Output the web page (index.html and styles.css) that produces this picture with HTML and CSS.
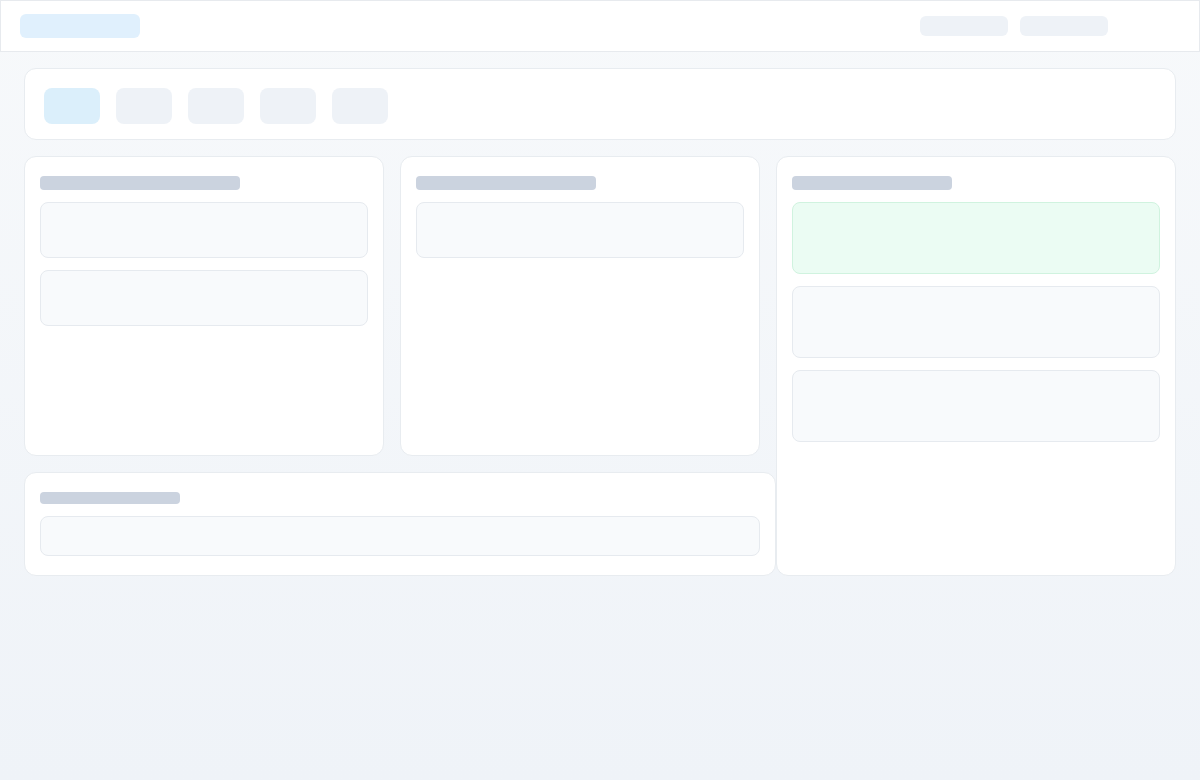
FILE: index.html
```html
<!DOCTYPE html>
<html lang="en">
<head>
<meta charset="utf-8">
<title>Loading</title>
<link rel="stylesheet" href="styles.css">
</head>
<body>
<header class="topbar">
  <div class="sk sk-logo"></div>
  <div class="topbar-right">
    <div class="sk sk-nav"></div>
    <div class="sk sk-nav"></div>
    <div class="sk-spacer"></div>
  </div>
</header>
<main class="page">
  <section class="card tabs">
    <div class="sk tab tab-active"></div>
    <div class="sk tab"></div>
    <div class="sk tab"></div>
    <div class="sk tab"></div>
    <div class="sk tab"></div>
  </section>
  <div class="grid">
    <section class="card col col-a">
      <div class="sk title w200"></div>
      <div class="block h56"></div>
      <div class="block h56"></div>
    </section>
    <section class="card col col-b">
      <div class="sk title w180"></div>
      <div class="block h56"></div>
    </section>
    <section class="card col col-c">
      <div class="sk title w160"></div>
      <div class="block h72 green"></div>
      <div class="block h72"></div>
      <div class="block h72"></div>
    </section>
    <section class="card col col-wide">
      <div class="sk title small w140"></div>
      <div class="block h40"></div>
    </section>
  </div>
</main>
</body>
</html>
```
FILE: styles.css
```css
* { box-sizing: border-box; }
html, body { margin: 0; padding: 0; }
body {
  width: 1200px;
  min-height: 780px;
  font-family: "Inter", "Liberation Sans", sans-serif;
  background: linear-gradient(180deg, #f7f9fb 0%, #eff3f8 100%);
}
.topbar {
  height: 52px;
  background: #ffffff;
  border: 1px solid #e7eaee;
  display: flex;
  align-items: center;
  justify-content: space-between;
  padding: 0 19px;
}
.topbar-right { display: flex; gap: 12px; align-items: center; }
.sk { border-radius: 6px; }
.sk-logo { width: 120px; height: 24px; background: #e0f0fd; }
.sk-nav { width: 88px; height: 20px; background: #eef2f7; }
.sk-spacer { width: 60px; height: 20px; }
.page { padding: 16px 24px; }
.card {
  background: #ffffff;
  border: 1px solid #e8ecf0;
  border-radius: 12px;
}
.tabs {
  display: flex;
  align-items: flex-start;
  gap: 16px;
  padding: 19px 19px 15px;
}
.tab { width: 56px; height: 36px; border-radius: 8px; background: #eef2f7; }
.tab-active { background: #dbeffb; }
.grid {
  margin-top: 16px;
  display: grid;
  grid-template-columns: 360px 360px 400px;
  grid-template-rows: 300px 104px;
  column-gap: 16px;
  row-gap: 16px;
}
.col {
  padding: 19px 15px;
  display: flex;
  flex-direction: column;
  gap: 12px;
}
.col-c { grid-column: 3; grid-row: 1 / 3; }
.col-wide { grid-column: 1 / 3; grid-row: 2; margin-right: -16px; }
.title { height: 14px; border-radius: 4px; background: #cbd3df; }
.title.small { height: 12px; }
.w200 { width: 200px; }
.w180 { width: 180px; }
.w160 { width: 160px; }
.w140 { width: 140px; }
.block {
  background: #f8fafc;
  border: 1px solid #e6eaef;
  border-radius: 8px;
  flex: none;
}
.block.green { background: #ebfcf3; border-color: #d0f3df; }
.h56 { height: 56px; }
.h72 { height: 72px; }
.h40 { height: 40px; }
```
